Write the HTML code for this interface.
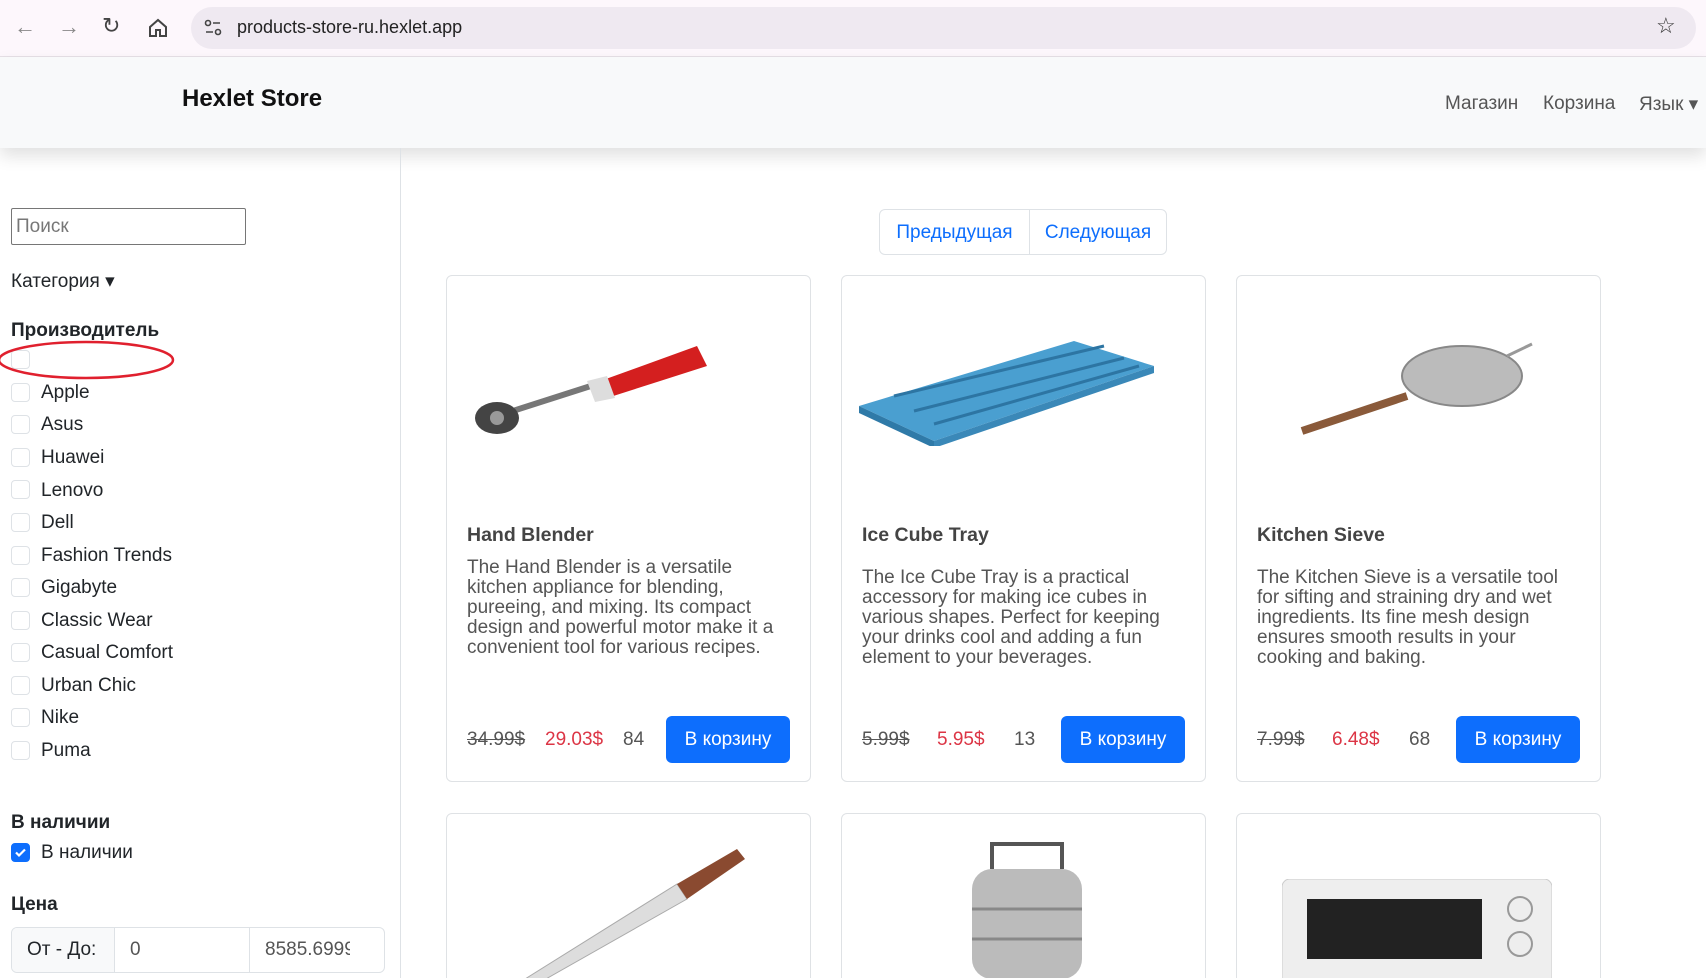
<!DOCTYPE html>
<html><head><meta charset="utf-8"><style>
*{box-sizing:border-box;margin:0;padding:0}
html{width:1706px;height:978px;overflow:hidden}
body{width:1706px;height:978px;overflow:hidden;background:#fff;font-family:"Liberation Sans",sans-serif;color:#212529;position:relative}
.abs{position:absolute}
.chrome{left:0;top:0;width:1706px;height:57px;background:#fdf7fc;border-bottom:1px solid #e6e0e6}
.url{left:191px;top:7px;width:1505px;height:42px;border-radius:21px;background:#efe9f1}
.nav{left:0;top:57px;width:1706px;height:91px;background:#f8f9fa;box-shadow:0 8px 16px rgba(0,0,0,.12)}
.side{left:400px;top:148px;width:1px;height:830px;background:#dee2e6}
.cb{position:absolute;left:11px;width:19px;height:19px;border:1px solid #dee2e6;border-radius:4px;background:#fff}
.lbl{position:absolute;left:41px;font-size:19px;line-height:22px}
.h{position:absolute;left:11px;font-size:19px;font-weight:bold}
.card{position:absolute;width:365px;border:1px solid #dfe2e5;border-radius:6px;background:#fff}
.card .t{position:absolute;left:20px;top:248px;font-size:19.5px;font-weight:bold;color:#444}
.card .d{position:absolute;left:20px;width:319px;font-size:19px;line-height:20px;color:#555}
.row{position:absolute;left:20px;top:440px;width:323px;height:47px;font-size:19px;color:#555}
.row span{position:absolute;top:13px}
.btn{position:absolute;right:0;top:0;width:124px;height:47px;background:#0d6efd;color:#fff;border-radius:6px;font-size:19px;line-height:47px;text-align:center}
</style></head><body>
<div class="abs chrome"></div>
<div class="abs" style="left:14px;top:14px;font-size:22px;color:#888">&#8592;</div>
<div class="abs" style="left:58px;top:14px;font-size:22px;color:#888">&#8594;</div>
<div class="abs" style="left:102px;top:13px;font-size:22px;color:#444">&#8635;</div>
<svg class="abs" style="left:148px;top:18px" width="20" height="20" viewBox="0 0 20 20"><path d="M2 9L10 2L18 9V18H12V12H8V18H2Z" fill="none" stroke="#444" stroke-width="2"/></svg>
<div class="abs url"></div>
<svg class="abs" style="left:203px;top:18px" width="20" height="20" viewBox="0 0 20 20"><circle cx="5" cy="5" r="2.5" fill="none" stroke="#444" stroke-width="1.6"/><path d="M10 5H17M3 14H10" stroke="#444" stroke-width="1.6"/><circle cx="15" cy="14" r="2.5" fill="none" stroke="#444" stroke-width="1.6"/></svg>
<div class="abs" style="left:237px;top:17px;font-size:18px;color:#222">products-store-ru.hexlet.app</div>
<div class="abs" style="left:1656px;top:13px;font-size:22px;color:#333">&#9734;</div>
<div class="abs nav"></div>
<div class="abs" style="left:182px;top:85px;font-size:24px;font-weight:bold;color:#111">Hexlet Store</div>
<div class="abs" style="left:1445px;top:93px;font-size:19px;color:#555">Магазин</div>
<div class="abs" style="left:1543px;top:93px;font-size:19px;color:#555">Корзина</div>
<div class="abs" style="left:1639px;top:93px;font-size:19px;color:#555">Язык &#9662;</div>
<div class="abs side"></div>

<div class="abs" style="left:11px;top:208px;width:235px;height:37px;border:1px solid #767676;border-radius:2px;font-size:19px;color:#777;padding:7px 4px">Поиск</div>
<div class="abs" style="left:11px;top:270px;font-size:19px">Категория &#9662;</div>
<div class="h" style="top:320px">Производитель</div>
<div class="cb" style="top:350px"></div>
<svg class="abs" style="left:0;top:339px" width="176" height="42"><ellipse cx="86" cy="21" rx="87" ry="18" fill="none" stroke="#e0202e" stroke-width="2.5"/></svg>
<div class="cb" style="top:383px"></div><div class="lbl" style="top:382px">Apple</div>
<div class="cb" style="top:415px"></div><div class="lbl" style="top:414px">Asus</div>
<div class="cb" style="top:448px"></div><div class="lbl" style="top:447px">Huawei</div>
<div class="cb" style="top:480px"></div><div class="lbl" style="top:480px">Lenovo</div>
<div class="cb" style="top:513px"></div><div class="lbl" style="top:512px">Dell</div>
<div class="cb" style="top:546px"></div><div class="lbl" style="top:545px">Fashion Trends</div>
<div class="cb" style="top:578px"></div><div class="lbl" style="top:577px">Gigabyte</div>
<div class="cb" style="top:611px"></div><div class="lbl" style="top:610px">Classic Wear</div>
<div class="cb" style="top:643px"></div><div class="lbl" style="top:642px">Casual Comfort</div>
<div class="cb" style="top:676px"></div><div class="lbl" style="top:675px">Urban Chic</div>
<div class="cb" style="top:708px"></div><div class="lbl" style="top:707px">Nike</div>
<div class="cb" style="top:741px"></div><div class="lbl" style="top:740px">Puma</div>
<div class="h" style="top:812px">В наличии</div>
<div class="cb" style="top:843px;background:#0d6efd;border-color:#0d6efd"><svg width="17" height="17" viewBox="0 0 17 17" style="position:absolute;left:0;top:0"><path d="M4 8.5L7 11.5L13 5.5" fill="none" stroke="#fff" stroke-width="2.2"/></svg></div>
<div class="lbl" style="top:842px">В наличии</div>
<div class="h" style="top:894px">Цена</div>
<div class="abs" style="left:11px;top:927px;width:374px;height:46px;border:1px solid #dee2e6;border-radius:6px;overflow:hidden;font-size:19px">
<div class="abs" style="left:0;top:0;width:103px;height:46px;background:#f8f9fa;border-right:1px solid #dee2e6;padding:11px 15px">От - До:</div>
<div class="abs" style="left:103px;top:0;width:135px;height:46px;border-right:1px solid #dee2e6;padding:11px 15px;color:#555">0</div>
<div class="abs" style="left:238px;top:0;width:100px;height:46px;padding:11px 0 0 15px;color:#555;overflow:hidden;white-space:nowrap">8585.6999</div>
</div>

<div class="abs" style="left:879px;top:209px;width:288px;height:46px;border:1px solid #dee2e6;border-radius:6px;font-size:19px;color:#0d6efd">
<div class="abs" style="left:0;top:0;width:150px;height:44px;border-right:1px solid #dee2e6;text-align:center;line-height:46px">Предыдущая</div>
<div class="abs" style="left:150px;top:0;width:136px;height:44px;text-align:center;line-height:46px">Следующая</div>
</div>

<div class="card" style="left:446px;top:275px;height:507px">
<svg class="abs" style="left:20px;top:60px" width="260" height="110" viewBox="0 0 260 110"><path d="M30 80L130 48" stroke="#777" stroke-width="6"/><path d="M125 48L230 10L240 30L140 62Z" fill="#d41f1f"/><path d="M120 45L140 40L148 62L128 66Z" fill="#ddd"/><ellipse cx="30" cy="82" rx="22" ry="16" fill="#444"/><circle cx="30" cy="82" r="7" fill="#999"/></svg>
<div class="t">Hand Blender</div>
<div class="d" style="top:282px">The Hand Blender is a versatile kitchen appliance for blending, pureeing, and mixing. Its compact design and powerful motor make it a convenient tool for various recipes.</div>
<div class="row"><span style="left:0;text-decoration:line-through">34.99$</span><span style="left:78px;color:#dc3545">29.03$</span><span style="left:156px">84</span><div class="btn">В корзину</div></div>
</div>
<div class="card" style="left:841px;top:275px;height:507px">
<svg class="abs" style="left:12px;top:60px" width="300" height="110" viewBox="0 0 300 110"><path d="M5 70L220 5L300 30L80 105Z" fill="#4a9fd0"/><path d="M5 70L80 105L80 112L5 77Z" fill="#2f7aa8"/><path d="M80 105L300 30L300 37L80 112Z" fill="#3a88b8"/><g stroke="#2d75a3" stroke-width="3"><path d="M40 60L250 10M60 75L270 22M80 88L285 30"/></g></svg>
<div class="t">Ice Cube Tray</div>
<div class="d" style="top:292px">The Ice Cube Tray is a practical accessory for making ice cubes in various shapes. Perfect for keeping your drinks cool and adding a fun element to your beverages.</div>
<div class="row"><span style="left:0;text-decoration:line-through">5.99$</span><span style="left:75px;color:#dc3545">5.95$</span><span style="left:152px">13</span><div class="btn">В корзину</div></div>
</div>
<div class="card" style="left:1236px;top:275px;height:507px">
<svg class="abs" style="left:60px;top:60px" width="260" height="110" viewBox="0 0 260 110"><path d="M5 95L110 60" stroke="#8a5a3a" stroke-width="8"/><ellipse cx="165" cy="40" rx="60" ry="30" fill="#bbb" stroke="#888" stroke-width="2"/><path d="M210 20L235 8" stroke="#999" stroke-width="3"/></svg>
<div class="t">Kitchen Sieve</div>
<div class="d" style="top:292px">The Kitchen Sieve is a versatile tool for sifting and straining dry and wet ingredients. Its fine mesh design ensures smooth results in your cooking and baking.</div>
<div class="row"><span style="left:0;text-decoration:line-through">7.99$</span><span style="left:75px;color:#dc3545">6.48$</span><span style="left:152px">68</span><div class="btn">В корзину</div></div>
</div>
<div class="card" style="left:446px;top:813px;height:175px;overflow:hidden"><svg class="abs" style="left:60px;top:30px" width="240" height="140"><path d="M10 140L170 40L180 55L30 140Z" fill="#ddd" stroke="#aaa"/><path d="M170 40L230 5L238 15L180 55Z" fill="#8a4a30"/></svg></div>
<div class="card" style="left:841px;top:813px;height:175px;overflow:hidden"><svg class="abs" style="left:110px;top:25px" width="150" height="140"><rect x="20" y="30" width="110" height="110" rx="20" fill="#bbb"/><path d="M40 30V5H110V30" fill="none" stroke="#555" stroke-width="4"/><path d="M20 70H130M20 100H130" stroke="#888" stroke-width="3"/></svg></div>
<div class="card" style="left:1236px;top:813px;height:175px;overflow:hidden"><svg class="abs" style="left:45px;top:65px" width="270" height="110"><rect x="0" y="0" width="270" height="110" rx="8" fill="#eee" stroke="#ccc"/><rect x="25" y="20" width="175" height="60" fill="#222"/><circle cx="238" cy="30" r="12" fill="none" stroke="#999" stroke-width="2"/><circle cx="238" cy="65" r="12" fill="none" stroke="#999" stroke-width="2"/></svg></div>
</body></html>
